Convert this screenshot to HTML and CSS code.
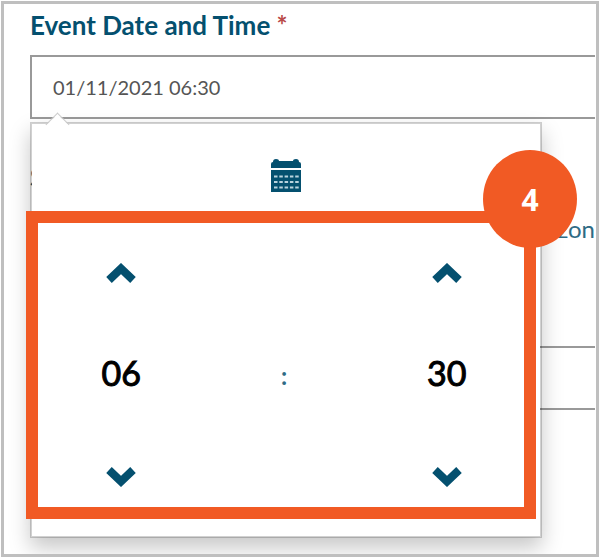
FILE: index.html
```html
<!DOCTYPE html>
<html lang="en">
<head>
  <meta charset="UTF-8">
  <meta name="viewport" content="width=device-width, initial-scale=1.0">
  <title>Event Date and Time</title>
  <link rel="stylesheet" href="styles.css">
</head>
<body>
  <form class="frame">
    <div class="field">
      <label for="event-date">Event Date and Time <span class="required">*</span></label>
      <input type="text" id="event-date" value="01/11/2021 06:30">

      <div class="picker">
        <button type="button" class="switch" aria-label="Show calendar">
          <svg width="30" height="34" viewBox="0 0 30 34" fill="#04506f">
            <path d="M0 9V5Q0 3 2 3Q2 0 5 0Q8 0 8 2H22Q22 0 25 0Q28 0 28 3Q30 3 30 5V9Z"/>
            <path d="M0 11H30V33H0Z"/>
            <path d="M3 17.5H28M3 23H28M3 28.5H28" stroke="#b9d3de" stroke-width="2" stroke-dasharray="3.5 1.8"/>
          </svg>
        </button>

        <div class="time">
          <button type="button" aria-label="Increase hour">
            <svg width="30" height="20" viewBox="0 0 30 20"><path d="M3 17L15 5.5L27 17"/></svg>
          </button>
          <span></span>
          <button type="button" aria-label="Increase minute">
            <svg width="30" height="20" viewBox="0 0 30 20"><path d="M3 17L15 5.5L27 17"/></svg>
          </button>

          <button type="button" class="value">06</button>
          <span class="colon">:</span>
          <button type="button" class="value">30</button>

          <button type="button" aria-label="Decrease hour">
            <svg width="30" height="20" viewBox="0 0 30 20"><path d="M3 3L15 14.5L27 3"/></svg>
          </button>
          <span></span>
          <button type="button" aria-label="Decrease minute">
            <svg width="30" height="20" viewBox="0 0 30 20"><path d="M3 3L15 14.5L27 3"/></svg>
          </button>

          <div class="highlight"></div>
          <div class="badge">4</div>
        </div>
      </div>
    </div>

    <div class="field">
      <label for="zone">S</label>
      <p class="hint">zon</p>
      <input type="text" id="zone">
    </div>
  </form>
</body>
</html>
```
FILE: styles.css
```css
* {
  margin: 0;
  padding: 0;
  box-sizing: border-box;
  font-family: Lato, "Liberation Sans", sans-serif;
}
body {
  padding: 1px;
  background: #fff;
}
.frame {
  border: 3px solid #bfbfbf;
  padding: 6px 1px 144px 26px;
  overflow: hidden;
}
.field {
  position: relative;
  margin-bottom: 43px;
}
.field:last-child {
  margin-bottom: 0;
}
label {
  display: block;
  font-size: 26px;
  line-height: 30px;
  font-weight: bold;
  color: #04506f;
}
.required {
  color: #b94a48;
}
input {
  display: block;
  width: 100%;
  height: 64px;
  margin-top: 15px;
  padding: 0 21px;
  border: 2px solid #999;
  border-right: none;
  background: #fff;
  font-size: 20px;
  color: #555;
}
.hint {
  margin: 22px 0 102px;
  font-size: 24px;
  line-height: 30px;
  text-align: right;
  color: #2f6b85;
}

/* dropdown */
.picker {
  position: absolute;
  top: 112px;
  left: 0;
  z-index: 10;
  width: 100%;
  max-width: 512px;
  padding-bottom: 8px;
  border: 2px solid rgba(0, 0, 0, 0.18);
  background: #fff;
  background-clip: padding-box;
  box-shadow: 0 10px 20px rgba(0, 0, 0, 0.22);
}
.picker::before {
  content: "";
  position: absolute;
  top: -8px;
  left: 17px;
  width: 16px;
  height: 16px;
  border: 1px solid #ccc;
  border-right: none;
  border-bottom: none;
  background: linear-gradient(135deg, #fff 50%, transparent 50%);
  transform: rotate(45deg);
}
.picker button {
  display: flex;
  justify-content: center;
  align-items: center;
  border: none;
  background: none;
  cursor: pointer;
}
.picker .switch {
  width: 100%;
  height: 98px;
  padding-top: 6px;
}
.time {
  position: relative;
  display: grid;
  grid-template-columns: repeat(3, 1fr);
  grid-auto-rows: 102px;
  align-items: center;
  padding: 0 12px 0 8px;
}
.time path {
  fill: none;
  stroke: #04506f;
  stroke-width: 8;
}
.picker .value {
  padding-bottom: 6px;
  font-size: 34px;
  -webkit-text-stroke: 1px #000;
  color: #000;
}
.colon {
  text-align: center;
  font-size: 24px;
  font-weight: bold;
  color: #2f6b85;
}
.highlight {
  position: absolute;
  top: -11px;
  right: 4px;
  bottom: 9px;
  left: -6px;
  border: 12px solid #f15a24;
  pointer-events: none;
}
.badge {
  position: absolute;
  top: -72px;
  right: -37px;
  display: flex;
  justify-content: center;
  align-items: center;
  width: 94px;
  height: 98px;
  border-radius: 50%;
  background: #f15a24;
  font-family: "Open Sans", sans-serif;
  font-size: 30px;
  font-weight: bold;
  color: #fff;
}
```
